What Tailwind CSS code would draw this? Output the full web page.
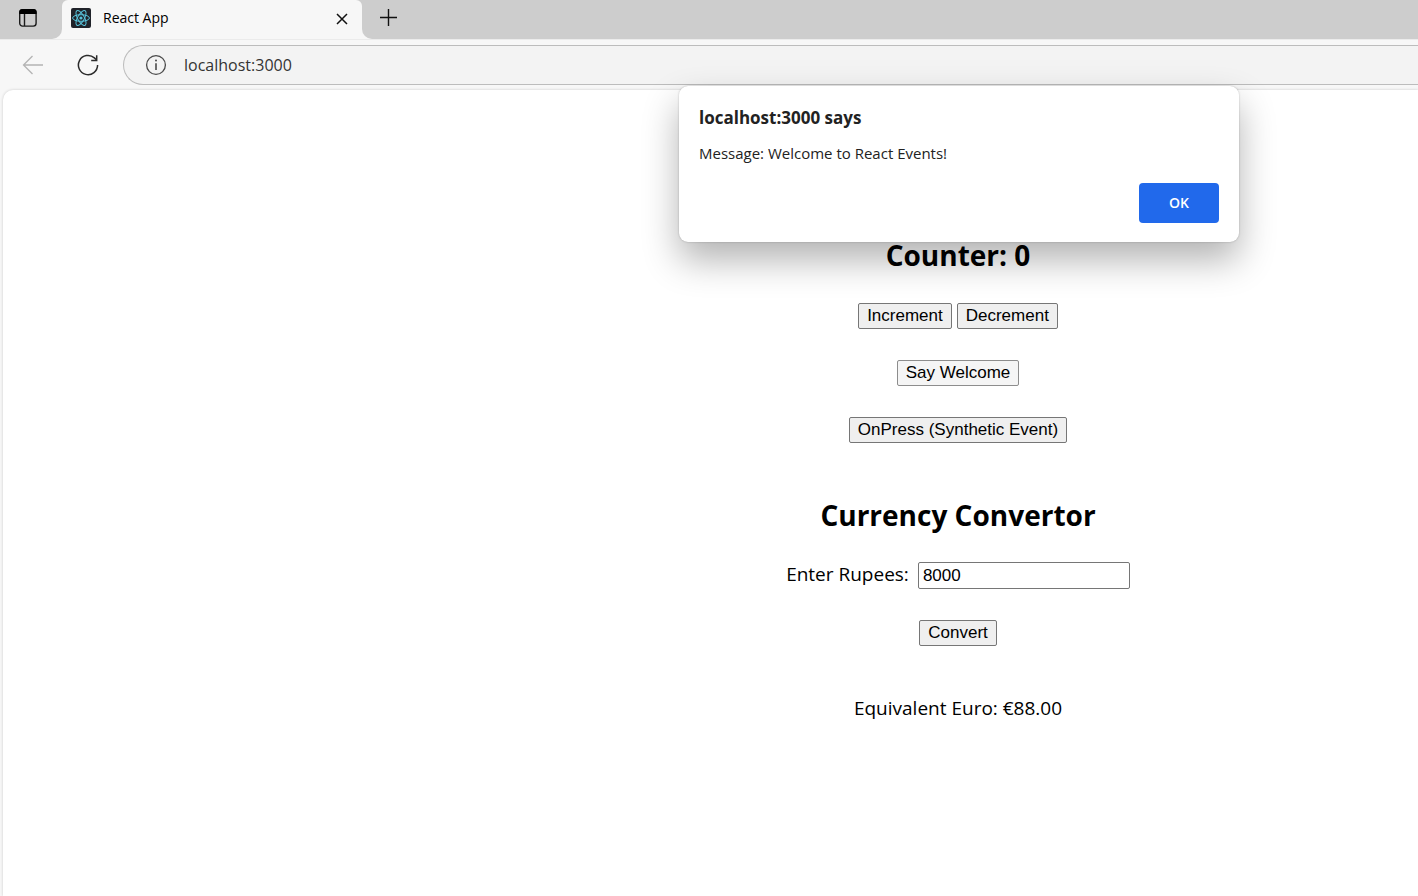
<!DOCTYPE html>
<html lang="en">
<head>
<meta charset="utf-8">
<meta name="viewport" content="width=device-width, initial-scale=1">
<title>React App</title>
<script src="https://cdn.jsdelivr.net/npm/@tailwindcss/browser@4"></script>
</head>
<body class="relative flex min-h-screen flex-col overflow-x-hidden bg-[#f7f7f7] font-['Open_Sans','Noto_Sans',sans-serif] text-black">
  <!-- Tab strip -->
  <header class="flex h-[39px] shrink-0">
    <div class="flex w-[62px] items-center rounded-br-[10px] bg-[#cdcdcd] pl-[18px] pb-[3px]">
      <button type="button" aria-label="Tab actions menu">
        <svg class="block size-5" viewBox="0 0 20 20" fill="none" stroke="#1b1b1b" stroke-width="1.4"><rect x="1.7" y="1.7" width="16.4" height="16.4" rx="2.8"/><path d="M6.500 6v12"/><path d="M1.2 6V4.4A3.3 3.3 0 0 1 4.5 1.1h10.8a3.3 3.3 0 0 1 3.3 3.3V6z" fill="#000" stroke="none"/></svg>
      </button>
    </div>
    <div class="w-[300px] bg-[#cdcdcd]">
      <div class="flex h-full items-center rounded-t-[6px] bg-[#f7f7f7] pr-3 pb-[3px] pl-[9px]">
        <svg class="size-5" viewBox="0 0 20 20" fill="none" stroke="#58c4dc" stroke-width="1"><rect width="20" height="20" rx="2" fill="#20232a" stroke="none"/><ellipse cx="10" cy="10" rx="8.4" ry="3.3"/><ellipse cx="10" cy="10" rx="8.4" ry="3.3" transform="rotate(60 10 10)"/><ellipse cx="10" cy="10" rx="8.4" ry="3.3" transform="rotate(120 10 10)"/><circle cx="10" cy="10" r="1.6" fill="#58c4dc" stroke="none"/></svg>
        <span class="ml-3 flex-1 text-sm">React App</span>
        <button type="button" aria-label="Close tab"><svg class="mt-[2px] block size-4" viewBox="0 0 16 16" stroke="#111" stroke-width="1.5"><path d="M3 3l10 10M13 3L3 13"/></svg></button>
      </div>
    </div>
    <div class="flex flex-1 items-center rounded-bl-[10px] bg-[#cdcdcd] pb-[4px] pl-[17px]">
      <button type="button" aria-label="New tab"><svg class="block size-[19px]" viewBox="0 0 19 19" stroke="#111" stroke-width="1.4"><path d="M9.500 1v17M1 9.500h17"/></svg></button>
    </div>
  </header>

  <!-- Toolbar -->
  <nav class="flex h-[51px] shrink-0 items-center border-t border-[#ebebeb] pl-[22px]">
    <button type="button" aria-label="Back" disabled><svg class="block size-[22px]" viewBox="0 0 22 22" fill="none" stroke="#b4b4b4" stroke-width="1.3"><path d="M21 11H1.500M10.500 2L1.500 11l9 9"/></svg></button>
    <button type="button" aria-label="Refresh" class="ml-[33px]"><svg class="block size-[22px]" viewBox="0 0 22 22" fill="none" stroke="#2b2b2b" stroke-width="1.5"><path d="M20.600 11a9.600 9.600 0 1 1-3.200-7.100L19.600 6"/><path d="M19.700 1.200v5.300h-5.500"/></svg></button>
    <div class="ml-[24px] flex h-10 flex-1 items-center rounded-l-full border border-r-0 border-[#bcbcbc] bg-[#f3f3f3] pl-[21px]">
      <svg class="size-[22px] shrink-0" viewBox="0 0 22 22" fill="none" stroke="#4a4a4a" stroke-width="1.3"><circle cx="11" cy="11" r="9.400"/><path d="M11 9.300v6.700" stroke-width="1.600"/><circle cx="11" cy="6.500" r="1" fill="#4a4a4a" stroke="none"/></svg>
      <input type="text" aria-label="Address" value="localhost:3000" class="ml-[17px] min-w-0 flex-1 bg-transparent text-base text-[#333] outline-none">
    </div>
  </nav>

  <!-- Page -->
  <main class="ml-[3px] flex flex-1 flex-col items-center rounded-tl-[10px] bg-white pt-[145px] pl-[495px] text-[19px] leading-7 shadow-[0_0_3px_rgba(0,0,0,0.18)]">
    <h2 class="text-[28px] leading-10 font-bold">Counter: 0</h2>
    <div class="mt-7 flex gap-[5px] font-['Liberation_Sans',Arial,sans-serif] text-[17px] leading-6">
      <button type="button" class="h-[26px] rounded-[2px] border border-[#767676] bg-[#efefef] px-2">Increment</button>
      <button type="button" class="h-[26px] rounded-[2px] border border-[#767676] bg-[#efefef] px-2">Decrement</button>
    </div>
    <button type="button" class="mt-[31px] h-[26px] rounded-[2px] border border-[#8d8d8d] bg-[#f5f5f5] px-2 font-['Liberation_Sans',Arial,sans-serif] text-[17px] leading-6">Say Welcome</button>
    <button type="button" class="mt-[31px] h-[26px] rounded-[2px] border border-[#767676] bg-[#efefef] px-2 font-['Liberation_Sans',Arial,sans-serif] text-[17px] leading-6">OnPress (Synthetic Event)</button>
    <h2 class="mt-[52px] text-[28px] leading-10 font-bold">Currency Convertor</h2>
    <form class="mt-[27px] flex flex-col items-center">
      <div class="flex items-start gap-[9px]">
        <label for="rupees" class="leading-6">Enter Rupees:</label>
        <input id="rupees" type="text" value="8000" class="h-[27px] w-[212px] rounded-[2px] border border-[#767676] bg-white px-1 font-['Liberation_Sans',Arial,sans-serif] text-[17px]">
      </div>
      <button type="button" class="mt-[31px] h-[26px] rounded-[2px] border border-[#767676] bg-[#efefef] px-2 font-['Liberation_Sans',Arial,sans-serif] text-[17px] leading-6">Convert</button>
    </form>
    <p class="mt-12">Equivalent Euro: €88.00</p>
  </main>

  <!-- Alert dialog, centred over the page content -->
  <div class="pointer-events-none absolute inset-x-0 top-[86px] flex justify-center pl-[500px]">
    <section role="alertdialog" aria-labelledby="alert-title" aria-describedby="alert-text" class="pointer-events-auto flex w-[560px] flex-col rounded-[9px] bg-white px-5 pt-5 pb-[19px] text-[#222] shadow-[0_0_2px_rgba(0,0,0,0.25),0_18px_36px_rgba(0,0,0,0.3)]">
      <h1 id="alert-title" class="text-[17px] leading-6 font-bold">localhost:3000 says</h1>
      <p id="alert-text" class="mt-[11px] text-[15px] leading-6">Message: Welcome to React Events!</p>
      <button type="button" class="mt-[18px] h-10 w-20 self-end rounded bg-[#2169eb] text-sm font-semibold text-white">OK</button>
    </section>
  </div>
</body>
</html>
